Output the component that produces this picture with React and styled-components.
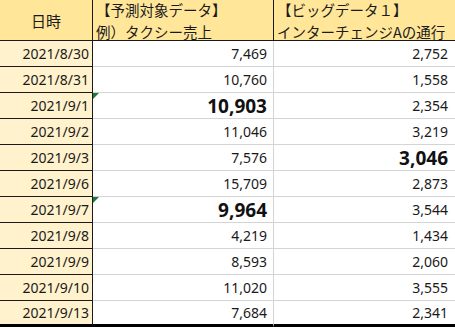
import styled, { createGlobalStyle } from "styled-components";

const GlobalStyle = createGlobalStyle`
  body {
    margin: 0;
    background: #ffffff;
    font-family: "Noto Sans CJK JP", "Noto Sans", sans-serif;
    color: #1a1a1a;
  }
`;

const rows = [
  { date: "2021/8/30", sales: "7,469", traffic: "2,752" },
  { date: "2021/8/31", sales: "10,760", traffic: "1,558" },
  { date: "2021/9/1", sales: "10,903", traffic: "2,354", boldSales: true, mark: true },
  { date: "2021/9/2", sales: "11,046", traffic: "3,219" },
  { date: "2021/9/3", sales: "7,576", traffic: "3,046", boldTraffic: true },
  { date: "2021/9/6", sales: "15,709", traffic: "2,873" },
  { date: "2021/9/7", sales: "9,964", traffic: "3,544", boldSales: true, mark: true },
  { date: "2021/9/8", sales: "4,219", traffic: "1,434" },
  { date: "2021/9/9", sales: "8,593", traffic: "2,060" },
  { date: "2021/9/10", sales: "11,020", traffic: "3,555" },
  { date: "2021/9/13", sales: "7,684", traffic: "2,341" },
];

export default function App() {
  return (
    <>
      <GlobalStyle />
      <Sheet>
        <HeadCell $center>日時</HeadCell>
        <HeadCell $line>
          <HeadLine>【予測対象データ】</HeadLine>
          <HeadLine>例）タクシー売上</HeadLine>
        </HeadCell>
        <HeadCell>
          <HeadLine>【ビッグデータ１】</HeadLine>
          <HeadLine>インターチェンジAの通行</HeadLine>
        </HeadCell>

        {rows.map((row, i) => {
          const last = i === rows.length - 1;
          return [
            <DateCell key={row.date + "d"} $last={last}>{row.date}</DateCell>,
            <NumCell key={row.date + "s"} $last={last} $bold={row.boldSales} $mark={row.mark} $pad={6} $line>
              {row.sales}
            </NumCell>,
            <NumCell key={row.date + "t"} $last={last} $bold={row.boldTraffic} $pad={7}>
              {row.traffic}
            </NumCell>,
          ];
        })}
      </Sheet>
    </>
  );
}

const Sheet = styled.div`
  display: grid;
  grid-template-columns: 93px 181px 181px;
  grid-template-rows: 41px;
  grid-auto-rows: 26px;
  width: 455px;
`;

const HeadCell = styled.div`
  background: #ffe699;
  border-bottom: 1px solid #1a1a1a;
  border-right: ${(p) => (p.$center || p.$line ? "1px solid #1a1a1a" : "none")};
  display: flex;
  flex-direction: column;
  align-items: ${(p) => (p.$center ? "center" : "flex-start")};
  justify-content: ${(p) => (p.$center ? "center" : "flex-start")};
  font-size: ${(p) => (p.$center ? "15px" : "14.5px")};
  padding-left: ${(p) => (p.$center ? "0" : "3px")};
  overflow: hidden;
  white-space: nowrap;
`;

const HeadLine = styled.div`
  line-height: 22px;
  &:first-child {
    margin-top: -1px;
  }
`;

const DateCell = styled.div`
  background: #fff2cc;
  border-right: 1px solid #1a1a1a;
  border-bottom: ${(p) => (p.$last ? "3px solid #000" : "1px solid #1a1a1a")};
  display: flex;
  align-items: center;
  justify-content: flex-end;
  padding-right: 3px;
  font-family: "Noto Sans", "Noto Sans CJK JP", sans-serif;
  font-size: 14px;
`;

const NumCell = styled.div`
  position: relative;
  border-right: ${(p) => (p.$line ? "1px solid #d4d4d4" : "none")};
  border-bottom: ${(p) => (p.$last ? "3px solid #000" : "1px solid #d4d4d4")};
  display: flex;
  align-items: center;
  justify-content: flex-end;
  padding-right: ${(p) => p.$pad}px;
  font-family: "Noto Sans", "Noto Sans CJK JP", sans-serif;
  font-size: ${(p) => (p.$bold ? "19px" : "14px")};
  font-weight: ${(p) => (p.$bold ? 700 : 400)};
  color: ${(p) => (p.$bold ? "#111" : "#1a1a1a")};

  &::before {
    content: "";
    display: ${(p) => (p.$mark ? "block" : "none")};
    position: absolute;
    top: 0;
    left: 0;
    border-top: 6px solid #1f7a35;
    border-right: 6px solid transparent;
  }
`;
